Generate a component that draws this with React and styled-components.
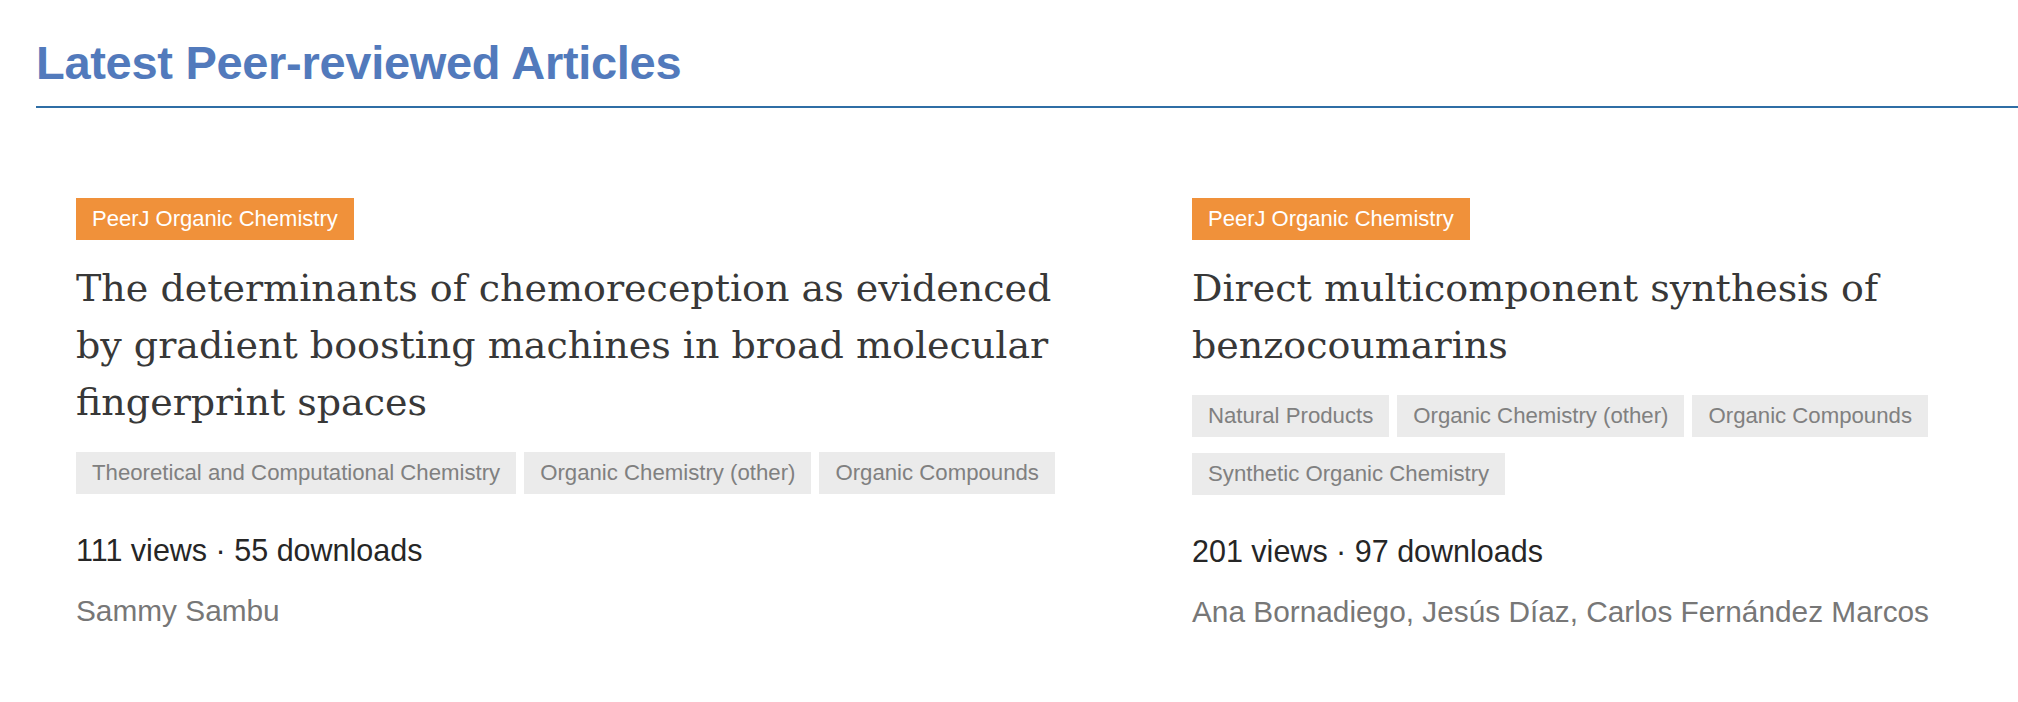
import React from "react";
import styled, { createGlobalStyle } from "styled-components";

const GlobalStyle = createGlobalStyle`
  html, body {
    margin: 0;
    padding: 0;
    background: #fff;
  }
  body {
    font-family: "Liberation Sans", Arial, Helvetica, sans-serif;
    -webkit-font-smoothing: antialiased;
    overflow: hidden;
  }
`;

const Section = styled.section`
  padding: 35px 0 0 36px;
`;

const Heading = styled.h2`
  margin: 0;
  padding-bottom: 15px;
  font-size: 47px;
  line-height: 56px;
  font-weight: 700;
  letter-spacing: -0.3px;
  color: #527abc;
  border-bottom: 2px solid #2f6ea5;
`;

const Grid = styled.div`
  display: grid;
  grid-template-columns: 1000px minmax(0, 1fr);
  column-gap: 116px;
  margin-top: 90px;
  padding: 0 40px;
`;

const Card = styled.article`
  display: flex;
  flex-direction: column;
  align-items: flex-start;
  min-width: 0;
`;

const Journal = styled.a`
  display: inline-block;
  height: 42px;
  padding: 0 16px;
  line-height: 42px;
  font-size: 22px;
  color: #fff;
  background: #f0913a;
  text-decoration: none;
`;

const Title = styled.h3`
  margin: 20px 0 0;
  font-family: "DejaVu Serif", "Liberation Serif", Georgia, serif;
  font-weight: 400;
  font-size: 38px;
  line-height: 57px;
  color: #383838;
`;

const Tags = styled.div`
  display: flex;
  flex-wrap: wrap;
  margin-top: 21px;
`;

const Tag = styled.span`
  height: 42px;
  padding: 0 16px;
  margin: 0 8px 16px 0;
  line-height: 42px;
  font-size: 22.2px;
  color: #808080;
  background: #ebebeb;
`;

const Stats = styled.div`
  margin-top: 20px;
  font-size: 30.5px;
  line-height: 40px;
  color: #262626;
`;

const Authors = styled.div`
  margin-top: 21px;
  font-size: 29.8px;
  line-height: 40px;
  color: #777;
`;

const articles = [
  {
    journal: "PeerJ Organic Chemistry",
    title:
      "The determinants of chemoreception as evidenced by gradient boosting machines in broad molecular fingerprint spaces",
    tags: [
      "Theoretical and Computational Chemistry",
      "Organic Chemistry (other)",
      "Organic Compounds",
    ],
    views: 111,
    downloads: 55,
    authors: "Sammy Sambu",
  },
  {
    journal: "PeerJ Organic Chemistry",
    title: "Direct multicomponent synthesis of benzocoumarins",
    tags: [
      "Natural Products",
      "Organic Chemistry (other)",
      "Organic Compounds",
      "Synthetic Organic Chemistry",
    ],
    views: 201,
    downloads: 97,
    authors: "Ana Bornadiego, Jesús Díaz, Carlos Fernández Marcos",
  },
];

export default function App() {
  return (
    <>
      <GlobalStyle />
      <Section>
        <Heading>Latest Peer-reviewed Articles</Heading>
        <Grid>
          {articles.map((item, i) => (
            <Card key={i}>
              <Journal href="#">{item.journal}</Journal>
              <Title>{item.title}</Title>
              <Tags>
                {item.tags.map((tag) => (
                  <Tag key={tag}>{tag}</Tag>
                ))}
              </Tags>
              <Stats>
                {item.views} views · {item.downloads} downloads
              </Stats>
              <Authors>{item.authors}</Authors>
            </Card>
          ))}
        </Grid>
      </Section>
    </>
  );
}
